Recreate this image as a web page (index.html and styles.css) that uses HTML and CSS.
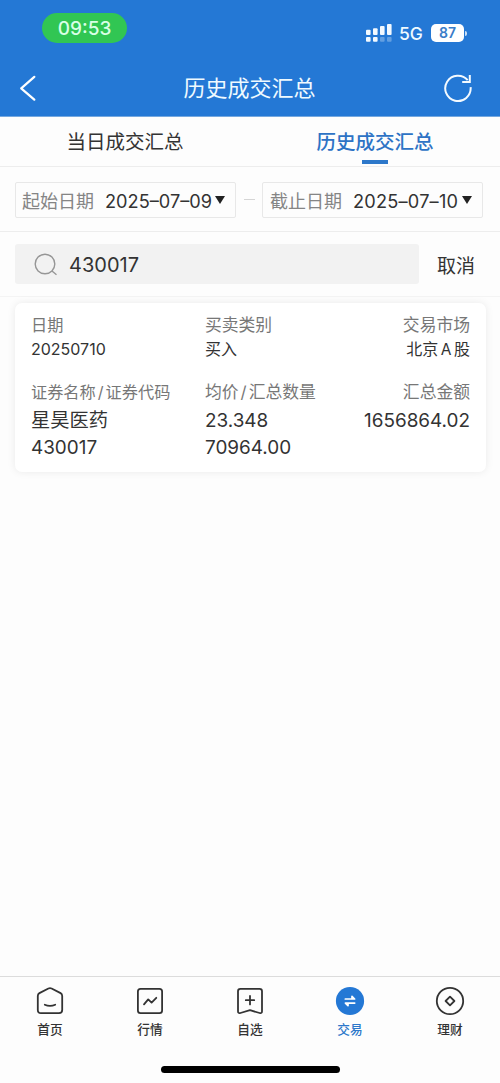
FILE: index.html
```html
<!DOCTYPE html>
<html lang="zh-CN">
<head>
<meta charset="utf-8">
<meta name="viewport" content="width=device-width, initial-scale=1">
<title>历史成交汇总</title>
<link rel="stylesheet" href="styles.css">
</head>
<body>
<div class="app">
  <header class="header">
    <div class="status">
      <span class="clock">09:53</span>
      <div class="status-right">
        <svg class="signal" width="26" height="18" viewBox="0 0 26 18" fill="#f2f9ff">
          <rect x="0" y="5.7" width="4.6" height="5.3" rx="1"/><rect x="7" y="4.3" width="4.6" height="6.7" rx="1"/><rect x="14" y="2" width="4.6" height="9" rx="1"/><rect x="21" y="0" width="4.6" height="11" rx="1"/>
          <rect x="0" y="13" width="4.6" height="4.8" rx="1"/><rect x="7" y="13" width="4.6" height="4.8" rx="1"/>
          <g opacity=".3"><rect x="14" y="13" width="4.6" height="4.8" rx="1"/><rect x="21" y="13" width="4.6" height="4.8" rx="1"/></g>
        </svg>
        <span class="network">5G</span>
        <span class="battery">87</span><i class="battery-cap"></i>
      </div>
    </div>
    <div class="titlebar">
      <svg class="back" width="18" height="26" viewBox="0 0 18 26" fill="none" stroke="#fff" stroke-width="2.2" stroke-linecap="round" stroke-linejoin="round"><path d="M15.3 1.8 2.2 13.3 15.3 24.7"/></svg>
      <h1 class="title">历史成交汇总</h1>
      <svg class="refresh" width="30" height="30" viewBox="0 0 30 30" fill="none" stroke="#f4faff" stroke-width="2"><path d="M27.6 14.2A12.7 12.7 0 1 1 24.7 7.2"/><path d="M26.8 2V9H19.2"/></svg>
    </div>
  </header>
  <nav class="tabs">
    <a class="tab">当日成交汇总</a>
    <a class="tab tab-active">历史成交汇总</a>
  </nav>
  <section class="dates">
    <div class="date"><span class="date-label">起始日期</span><span class="date-value">2025–07–09</span><i class="caret"></i></div>
    <i class="dash"></i>
    <div class="date"><span class="date-label">截止日期</span><span class="date-value date-end">2025–07–10</span><i class="caret"></i></div>
  </section>
  <section class="search">
    <div class="search-box">
      <svg class="search-icon" width="24" height="24" viewBox="0 0 24 24" fill="none" stroke="#969696" stroke-width="1.4"><circle cx="11" cy="11" r="9.8"/><path d="m18 18 4.5 3.8"/></svg>
      <span class="query">430017</span>
    </div>
    <span class="cancel">取消</span>
  </section>
  <main class="list">
    <article class="card">
      <div class="row row-top">
        <div class="cell"><span class="label label-narrow">日期</span><span class="small">20250710</span></div>
        <div class="cell"><span class="label">买卖类别</span><span class="small">买入</span></div>
        <div class="cell end"><span class="label">交易市场</span><span class="small">北京<span class="latin">A</span>股</span></div>
      </div>
      <div class="row">
        <div class="cell"><span class="label label-narrow">证券名称<span class="slash">/</span>证券代码</span><span class="big name">星昊医药</span><span class="big">430017</span></div>
        <div class="cell"><span class="label">均价<span class="slash">/</span>汇总数量</span><span class="big">23.348</span><span class="big">70964.00</span></div>
        <div class="cell end"><span class="label">汇总金额</span><span class="big">1656864.02</span></div>
      </div>
    </article>
  </main>
  <footer class="footer">
    <nav class="nav">
      <a class="nav-item"><svg class="icon" viewBox="0 0 30 30"><path d="M4.4 7.1 13.4 2.5Q15 1.8 16.6 2.5L25.6 7.1Q27.2 8 27.2 10V24Q27.2 27.2 24 27.2H6Q2.8 27.2 2.8 24V10Q2.8 8 4.4 7.1Z"/><path d="M9.8 18.7Q15 21.2 20.2 18.7"/></svg>首页</a>
      <a class="nav-item"><svg class="icon" viewBox="0 0 30 30"><rect x="2.9" y="2.9" width="24.2" height="24.2" rx="2.6"/><path d="m9 18.4 4.2-5 3.4 3.2 4.7-4.8"/></svg>行情</a>
      <a class="nav-item"><svg class="icon" viewBox="0 0 30 30"><path d="M5.4 2.9H24.6Q27 2.9 27 5.3V25.2Q27 27.7 24.6 27L15 24.2 5.4 27Q3 27.7 3 25.2V5.3Q3 2.9 5.4 2.9ZM15 10V18.4M10.8 14.2H19.2"/></svg>自选</a>
      <a class="nav-item nav-active"><svg class="icon" viewBox="0 0 30 30"><circle cx="15" cy="15" r="14.1" fill="#2478d5" stroke="none"/><path d="M10.3 13H19.6L17 10.4V13M19.7 17.1H10.4L13 19.7V17.1" fill="#fff" stroke="#fff" stroke-width="1.7"/></svg>交易</a>
      <a class="nav-item"><svg class="icon" viewBox="0 0 30 30"><circle cx="15" cy="15" r="13.2"/><path d="m15 10.6 4.4 4.4-4.4 4.4-4.4-4.4Z"/></svg>理财</a>
    </nav>
    <div class="home-bar"></div>
  </footer>
</div>
</body>
</html>
```
FILE: styles.css
```css
* { box-sizing: border-box; }
body { margin: 0; background: #fdfdfd; color: #333; font-family: Inter, "Noto Sans CJK SC", sans-serif; }
svg { display: block; flex: none; }
.app { display: flex; flex-direction: column; width: 500px; height: 1083px; overflow: hidden; }

.header { height: 117px; flex: none; background: #2478d5; border-bottom: 1px solid #75a8df; color: #effaff; }
.status { display: flex; justify-content: space-between; height: 60px; padding: 13px 33px 0 42px; }
.clock { width: 85px; height: 30px; border-radius: 15px; background: #31c653; text-align: center; font-size: 19px; font-weight: 500; line-height: 32px; color: #d9ffe6; }
.status-right { display: flex; align-items: center; height: 40px; }
.signal { margin-top: -1px; }
.network { width: 39px; padding-left: 7px; font-size: 17.5px; font-weight: 500; white-space: nowrap; }
.battery { width: 33px; height: 18px; border-radius: 5px; background: #fff; color: #397cc8; text-align: center; font-size: 14px; font-weight: 600; line-height: 18px; }
.battery-cap { width: 2px; height: 5px; margin-left: 1px; border-radius: 0 2px 2px 0; background: #c9dff6; }
.titlebar { display: flex; align-items: center; justify-content: space-between; height: 56px; padding: 0 27px 0 19px; }
.title { margin: 0; padding: 0 0 0 19px; font-size: 22px; font-weight: 400; line-height: 30px; }

.tabs { display: flex; flex: none; height: 50px; border-bottom: 1px solid #ededed; }
.tab { display: flex; flex: 1; flex-direction: column; align-items: center; padding-top: 10px; font-size: 19.5px; line-height: 30px; }
.tab-active { color: #2d73c5; font-weight: 500; }
.tab-active::after { content: ""; width: 26px; height: 4px; margin-top: 3px; background: #2d78ca; }

.dates { display: flex; flex: none; align-items: center; justify-content: space-between; height: 65px; padding: 2px 17px 1px 15px; border-bottom: 1px solid #ededed; }
.date { display: flex; align-items: center; width: 221px; height: 36px; padding-left: 6px; border: 1px solid #e8e8e8; border-radius: 2px; white-space: nowrap; }
.date + .dash + .date { padding-left: 7px; }
.date-label { width: 83px; flex: none; font-size: 18px; color: #858585; }
.date-value { width: 110px; flex: none; padding-top: 2px; font-size: 18.2px; }
.date-end { width: 109px; letter-spacing: .2px; }
.caret { flex: none; border: 5px solid transparent; border-top: 8px solid #222; border-bottom: 0; }
.dash { width: 11px; height: 1px; background: #d5d5d5; }

.search { display: flex; flex: none; align-items: center; justify-content: space-between; height: 65px; padding: 0 25px 0 15px; border-bottom: 1px solid #f4f4f4; }
.search-box { display: flex; align-items: center; width: 404px; height: 40px; padding-left: 19px; border-radius: 3px; background: #f2f2f2; }
.search-icon { margin-top: 2px; }
.query { margin-left: 11px; padding-top: 1px; font-size: 20px; }
.cancel { font-size: 19px; }

.list { flex: 1; padding: 6px 14px 0 15px; }
.card { height: 169px; padding: 9px 16px 0 16px; border-radius: 7px; background: #fff; box-shadow: 0 0 8px rgba(0, 0, 0, .08); }
.row { display: grid; grid-template-columns: 174px 130px 1fr; }
.row-top { height: 67px; }
.cell { display: flex; flex-direction: column; white-space: nowrap; }
.end { align-items: flex-end; }
.label { height: 25px; font-size: 16.8px; line-height: 26px; color: #777; }
.label-narrow { font-size: 16.2px; }
.slash { padding: 0 2px; }
.small { height: 25px; font-size: 16px; line-height: 25px; }
.latin { padding: 0 2.5px; font-size: 15.5px; }
.big { height: 27px; font-size: 18.9px; line-height: 33px; }
.name { font-size: 19.3px; }

.footer { flex: none; height: 107px; border-top: 1px solid #dcdcdc; }
.nav { display: grid; grid-template-columns: repeat(5, 1fr); height: 89px; padding-top: 9px; }
.nav-item { display: flex; flex-direction: column; align-items: center; font-size: 12.7px; font-weight: 500; line-height: 20px; }
.icon { width: 30px; height: 30px; margin-bottom: 4px; fill: none; stroke: #333; stroke-width: 1.8; stroke-linejoin: round; stroke-linecap: round; }
.nav-active { color: #2d78ca; }
.home-bar { width: 179px; height: 7px; margin: 0 auto; border-radius: 4px; background: #000; }
```
